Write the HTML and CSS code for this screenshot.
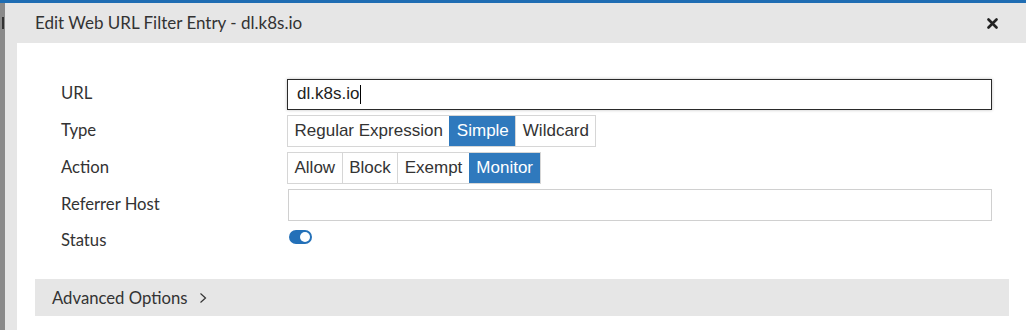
FILE: index.html
```html
<!DOCTYPE html>
<html lang="en">
<head>
  <meta charset="UTF-8">
  <title>Edit Web URL Filter Entry</title>
  <link rel="stylesheet" href="styles.css">
</head>
<body>
  <div class="topbar"></div>
  <div class="screen">
    <div class="backdrop"><span class="backdrop-mark"></span></div>

    <div class="dialog">
      <div class="dialog-header">
        <span class="dialog-title">Edit Web URL Filter Entry - dl.k8s.io</span>
        <button class="close" aria-label="Close">
          <svg width="11" height="11" viewBox="0 0 11 11">
            <path d="M1.5 1.5 L9.5 9.5 M9.5 1.5 L1.5 9.5" stroke="#222" stroke-width="2.6" stroke-linecap="round"/>
          </svg>
        </button>
      </div>

      <div class="dialog-body">
        <div class="form">
          <div class="row">
            <label class="label">URL</label>
            <div class="field url-field">dl.k8s.io<span class="caret"></span></div>
          </div>

          <div class="row">
            <label class="label">Type</label>
            <div class="seg">
              <span class="seg-item">Regular Expression</span>
              <span class="seg-item active">Simple</span>
              <span class="seg-item">Wildcard</span>
            </div>
          </div>

          <div class="row">
            <label class="label">Action</label>
            <div class="seg">
              <span class="seg-item">Allow</span>
              <span class="seg-item">Block</span>
              <span class="seg-item">Exempt</span>
              <span class="seg-item active">Monitor</span>
            </div>
          </div>

          <div class="row">
            <label class="label">Referrer Host</label>
            <div class="field plain-field"></div>
          </div>

          <div class="row status-row">
            <label class="label">Status</label>
            <span class="toggle"><span class="knob"></span></span>
          </div>
        </div>

        <div class="advanced">
          <span>Advanced Options</span>
          <svg class="chev" width="8" height="12" viewBox="0 0 8 12">
            <polyline points="1.5,1.5 6.5,6 1.5,10.5" fill="none" stroke="#333" stroke-width="1.2"/>
          </svg>
        </div>
      </div>
    </div>
  </div>
</body>
</html>
```

FILE: styles.css
```css
body {
  margin: 0;
  background: #8a8a8a;
  font-family: Lato, 'Open Sans', sans-serif;
  color: #333;
  overflow: hidden;
}
.topbar {
  height: 3px;
  background: #1f6db3;
}
.screen {
  display: flex;
  height: 327px;
}
.backdrop {
  width: 5px;
  flex: none;
  padding-top: 14px;
}
.backdrop-mark {
  display: block;
  width: 2px;
  height: 12px;
  margin-left: 2px;
  background: #333;
}
.dialog {
  flex: 1;
  background: #e6e6e6;
  display: flex;
  flex-direction: column;
}
.dialog-header {
  height: 40px;
  display: flex;
  align-items: center;
  justify-content: space-between;
  padding: 0 28px 0 30px;
}
.dialog-title {
  font-size: 17px;
  color: #333;
  margin-top: -2px;
}
.close {
  border: none;
  background: none;
  padding: 0;
  display: flex;
  margin-top: 1px;
}
.dialog-body {
  flex: 1;
  background: #fff;
  margin-left: 12px;
  padding: 35px 17px 0 18px;
}
.form {
  padding-left: 26px;
  display: flex;
  flex-direction: column;
  gap: 5px;
}
.row {
  display: flex;
  align-items: center;
  height: 32px;
}
.label {
  width: 226px;
  flex: none;
  font-size: 16.7px;
  color: #333;
  margin-top: -2px;
}
.field {
  box-sizing: border-box;
  width: 705px;
  height: 32px;
  font-family: 'Liberation Sans', Arial, sans-serif;
  font-size: 17px;
  color: #222;
}
.url-field {
  height: 31px;
  border: 1px solid #2a2a2a;
  box-shadow: 0 0 3px rgba(0,0,0,0.25);
  padding: 0 9px;
  display: flex;
  align-items: center;
}
.caret {
  display: inline-block;
  width: 1px;
  height: 19px;
  background: #000;
  margin-left: 1px;
}
.plain-field {
  border: 1px solid #d0d0d0;
  margin-left: 1px;
  width: 704px;
}
.seg {
  display: flex;
  height: 32px;
  border: 1px solid #d6d6d6;
  box-sizing: border-box;
}
.seg-item {
  display: flex;
  align-items: center;
  padding: 0 6.5px;
  font-family: 'Liberation Sans', Arial, sans-serif;
  font-size: 17px;
  color: #333;
  border-left: 1px solid #d6d6d6;
}
.seg-item:first-child {
  border-left: none;
}
.seg-item.active {
  background: #2f79bd;
  color: #fff;
  border-left-color: #2f79bd;
}
.status-row {
  align-items: flex-start;
}
.status-row .label {
  margin-top: 4px;
}
.toggle {
  margin-top: 4px;
  margin-left: 2px;
  width: 23px;
  height: 14px;
  border-radius: 7px;
  background: #2370b8;
  position: relative;
}
.knob {
  position: absolute;
  right: 2px;
  top: 2px;
  width: 10px;
  height: 10px;
  border-radius: 50%;
  background: #fff;
}
.advanced {
  margin-top: 21px;
  height: 37px;
  background: #e6e6e6;
  display: flex;
  align-items: center;
  gap: 12px;
  padding-left: 17px;
  font-size: 16.7px;
  color: #333;
}
.chev {
  margin-top: 1px;
}
```
